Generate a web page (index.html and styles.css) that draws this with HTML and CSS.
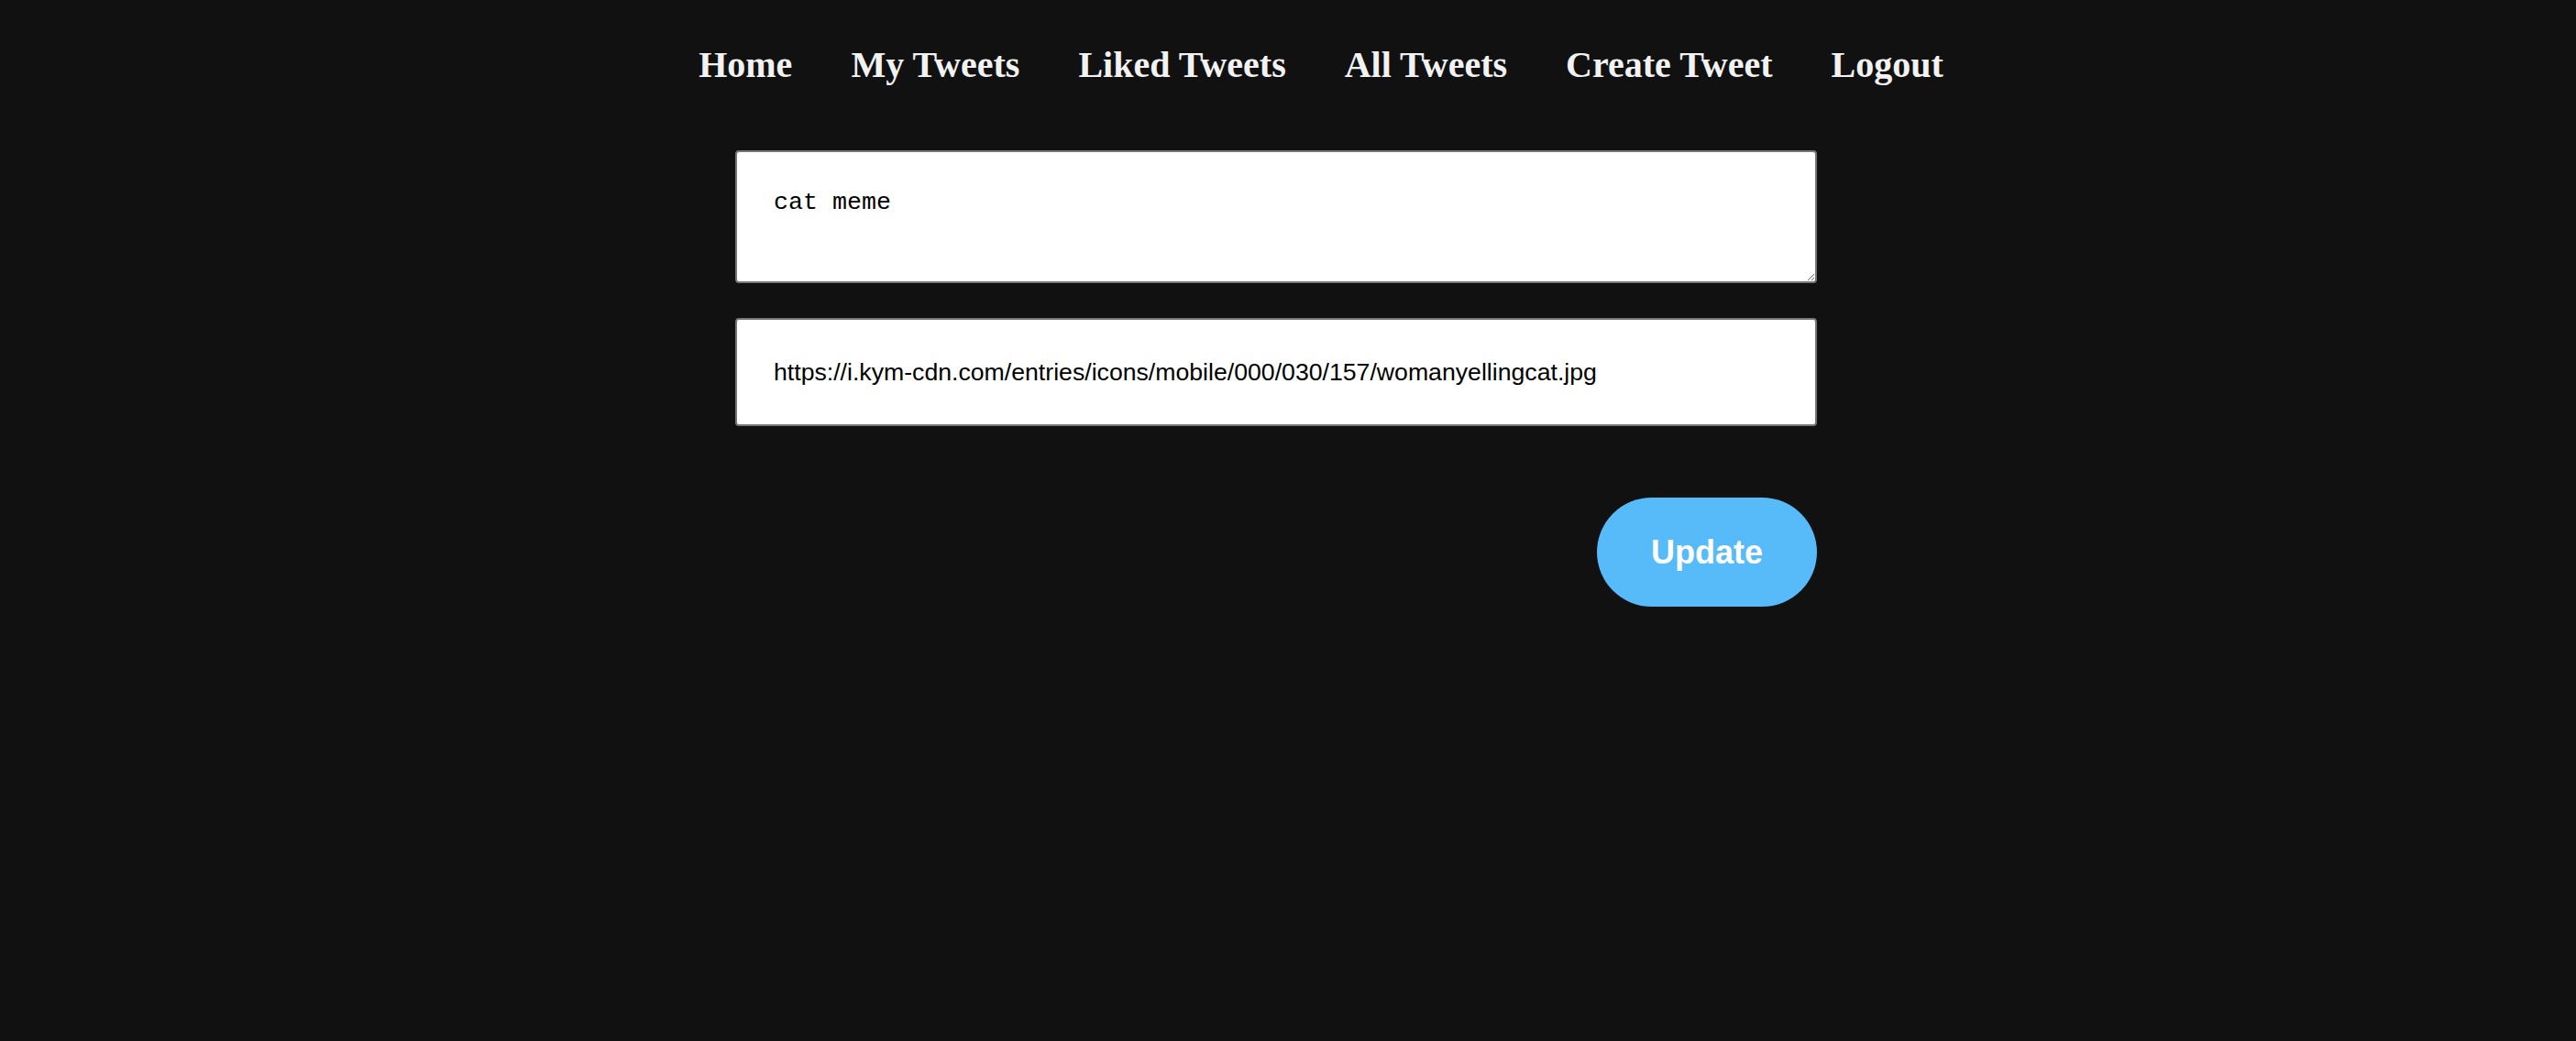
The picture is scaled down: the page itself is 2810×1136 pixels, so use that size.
FILE: index.html
```html
<!DOCTYPE html>
<html lang="en">
<head>
<meta charset="utf-8">
<title>Edit Tweet</title>
<link rel="stylesheet" href="styles.css">
</head>
<body>
<nav class="nav">
  <a class="nav-link" href="#">Home</a>
  <a class="nav-link" href="#">My Tweets</a>
  <a class="nav-link" href="#">Liked Tweets</a>
  <a class="nav-link" href="#">All Tweets</a>
  <a class="nav-link" href="#">Create Tweet</a>
  <a class="nav-link" href="#">Logout</a>
</nav>
<form class="tweet-form">
  <textarea class="tweet-text" rows="2">cat meme</textarea>
  <input class="tweet-url" type="text" value="https://i.kym-cdn.com/entries/icons/mobile/000/030/157/womanyellingcat.jpg">
  <div class="actions">
    <button class="update-btn" type="button">Update</button>
  </div>
</form>
</body>
</html>
```
FILE: styles.css
```css
html, body {
  margin: 0;
  padding: 0;
  background: #111111;
}
body {
  min-height: 1136px;
  font-family: "Liberation Serif", "Times New Roman", serif;
}
.nav {
  display: flex;
  justify-content: center;
  gap: 64px;
  padding: 48px 0 0 72px;
}
.nav-link {
  color: #f2f2f2;
  text-decoration: none;
  font-weight: bold;
  font-size: 40px;
  line-height: 46px;
}
.tweet-form {
  display: flex;
  flex-direction: column;
  width: 1180px;
  margin: 70px 0 0 calc(50% - 603px);
}
.tweet-text {
  box-sizing: border-box;
  width: 100%;
  height: 145px;
  padding: 40px;
  border: 2px solid #767676;
  border-radius: 4px;
  background: #ffffff;
  color: #000000;
  font-family: "Liberation Mono", "Courier New", monospace;
  font-size: 26.67px;
  margin: 0;
}
.tweet-url {
  box-sizing: border-box;
  width: 100%;
  height: 118px;
  margin: 38px 0 0;
  padding: 0 40px;
  border: 2px solid #767676;
  border-radius: 4px;
  background: #ffffff;
  color: #000000;
  font-family: "Liberation Sans", Arial, sans-serif;
  font-size: 26.67px;
}
.actions {
  display: flex;
  justify-content: flex-end;
  margin-top: 78px;
}
.update-btn {
  width: 240px;
  height: 119px;
  border: none;
  border-radius: 60px;
  background: #56bbf8;
  color: #ffffff;
  font-family: "Liberation Sans", Arial, sans-serif;
  font-weight: bold;
  font-size: 36px;
  padding: 0;
  cursor: pointer;
}
```
